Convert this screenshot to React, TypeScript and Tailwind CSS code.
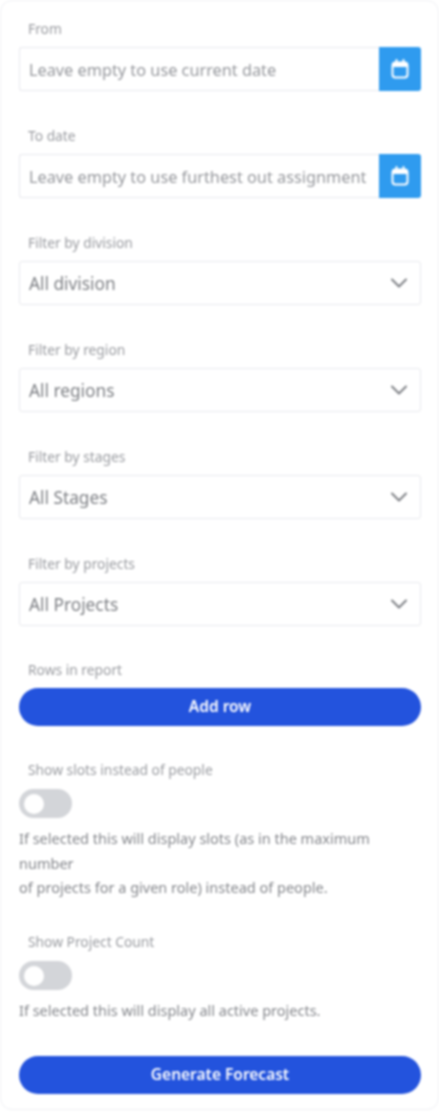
import { ChevronDown } from "lucide-react"

const font = "font-['Noto_Sans',sans-serif]"

function Label({ children }: { children: string }) {
	return (
		<div className="h-[18px] pl-[9px] text-[13.8px] leading-[15px] text-[#9a9ca1]">
			{children}
		</div>
	)
}

function CalendarIcon() {
	return (
		<svg width="18" height="20" viewBox="0 0 18 20" fill="none" className="text-white">
			<rect x="1.5" y="3.5" width="15" height="15" rx="3" stroke="currentColor" strokeWidth="2" />
			<path d="M2 5.5C2 4.4 2.9 3.5 4 3.5H14C15.1 3.5 16 4.4 16 5.5V8H2V5.5Z" fill="currentColor" />
			<path d="M5.5 1V4.5M12.5 1V4.5" stroke="currentColor" strokeWidth="2" strokeLinecap="round" />
		</svg>
	)
}

function DateField({ label, placeholder }: { label: string; placeholder: string }) {
	return (
		<div className="flex flex-col gap-[8px]">
			<Label>{label}</Label>
			<div className="flex h-[44px]">
				<div className="flex min-w-0 flex-1 items-center rounded-l-[3px] border border-r-0 border-[#e8e9ee] bg-white pt-[2px] pl-[9px] text-[16.3px] whitespace-nowrap text-[#96989d]">
					{placeholder}
				</div>
				<div className="flex w-[42px] items-center justify-center rounded-r-[3px] bg-[#2f9bef]">
					<CalendarIcon />
				</div>
			</div>
		</div>
	)
}

function SelectField({ label, value }: { label: string; value: string }) {
	return (
		<div className="flex flex-col gap-[8px]">
			<Label>{label}</Label>
			<div className="flex h-[44px] items-center justify-between rounded-[3px] border border-[#e8e9ee] bg-white pr-[7px] pl-[9px] text-[17.3px] text-[#7e8085]">
				<span className="pt-[2px]">{value}</span>
				<ChevronDown className="h-[28px] w-[28px] text-[#7e8085]" strokeWidth={1.7} />
			</div>
		</div>
	)
}

function Toggle() {
	return (
		<div className="flex h-[29px] w-[53px] items-center rounded-full bg-[#d3d5d9] pl-[5px]">
			<div className="h-[20px] w-[20px] rounded-full bg-white" />
		</div>
	)
}

function PrimaryButton({ children }: { children: string }) {
	return (
		<button className="h-[38px] w-full rounded-full bg-[#2353dd] text-[15.5px] font-semibold text-white">
			{children}
		</button>
	)
}

export default function App() {
	return (
		<div className={`${font} h-[1112px] w-[439px] bg-white blur-[0.8px]`}>
			<div className="flex h-[1110px] flex-col rounded-[12px] border border-[#eff0f4] bg-white pt-[20px] pr-[17px] pl-[18px]">
				<div className="flex flex-col gap-[37px]">
					<DateField label="From" placeholder="Leave empty to use current date" />
					<DateField label="To date" placeholder="Leave empty to use furthest out assignment" />
					<SelectField label="Filter by division" value="All division" />
					<SelectField label="Filter by region" value="All regions" />
					<SelectField label="Filter by stages" value="All Stages" />
					<SelectField label="Filter by projects" value="All Projects" />
				</div>

				<div className="mt-[36px] flex flex-col gap-[8px]">
					<Label>Rows in report</Label>
					<PrimaryButton>Add row</PrimaryButton>
				</div>

				<div className="mt-[36px]">
					<Label>Show slots instead of people</Label>
					<div className="mt-[9px]">
						<Toggle />
					</div>
					<p className="mt-[8px] text-[14.5px] leading-[24.5px] text-[#85878c]">
						If selected this will display slots (as in the maximum number
						<br />
						of projects for a given role) instead of people.
					</p>
				</div>

				<div className="mt-[34.5px]">
					<Label>Show Project Count</Label>
					<div className="mt-[9px]">
						<Toggle />
					</div>
					<p className="mt-[8px] text-[14.5px] leading-[24.5px] text-[#85878c]">
						If selected this will display all active projects.
					</p>
				</div>

				<div className="mt-[33.5px]">
					<PrimaryButton>Generate Forecast</PrimaryButton>
				</div>
			</div>
		</div>
	)
}
